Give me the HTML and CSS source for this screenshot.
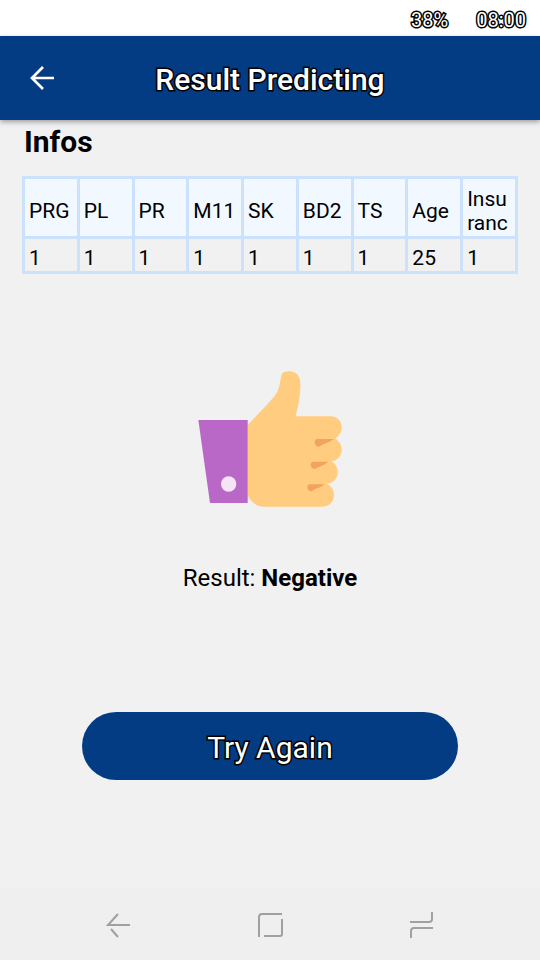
FILE: index.html
```html
<!DOCTYPE html>
<html lang="en">
<head>
<meta charset="utf-8">
<meta name="viewport" content="width=device-width, initial-scale=1">
<title>Result Predicting</title>
<link rel="stylesheet" href="styles.css">
</head>
<body>
<div class="status outlined"><span>38%</span><time>08:00</time></div>
<header class="appbar">
  <button class="back" type="button" aria-label="Back">
    <svg width="24" height="24" viewBox="0 0 24 24" fill="none" stroke="#fff" stroke-width="2.7"><path d="M24 12H2M13 1 2 12l11 11"/></svg>
  </button>
  <h1 class="title outlined">Result Predicting</h1>
</header>
<main class="content">
  <h2 class="heading">Infos</h2>
  <table class="infos">
    <thead>
      <tr><th scope="col">PRG</th><th scope="col">PL</th><th scope="col">PR</th><th scope="col">M11</th><th scope="col">SK</th><th scope="col">BD2</th><th scope="col">TS</th><th scope="col">Age</th><th scope="col">Insuranc</th></tr>
    </thead>
    <tbody>
      <tr><td>1</td><td>1</td><td>1</td><td>1</td><td>1</td><td>1</td><td>1</td><td>25</td><td>1</td></tr>
    </tbody>
  </table>
  <svg class="thumb" width="180" height="160" viewBox="0 0 540 480" role="img" aria-label="Thumbs up">
    <path fill="#ffcc80" d="M203 195C240 156 265 130 284 108 302 86 299 59 306 42 310 32 334 31 345 38 360 47 362 65 361 85 360 115 353 143 347 169H452C473 169 485 184 485 202 485 216 478 228 466 236 478 242 485 255 485 270 485 287 474 301 455 304 466 311 473 323 473 337 473 356 460 370 440 371 454 377 462 390 462 405 462 425 448 440 426 440H252C229 440 211 425 203 406Z"/>
    <path fill="#f2a35e" d="M410 237H461C449 248 433 249 421 258 413 264 404 256 404 247 404 242 406 239 410 237ZM399 305H444C433 317 420 317 409 325 401 330 392 323 392 315 392 309 395 306 399 305ZM389 373H433C423 384 410 383 398 392 390 397 382 390 382 382 382 377 385 374 389 373Z"/>
    <path fill="#ba68c8" d="M55 180H203V429H90Z"/>
    <circle cx="146" cy="372" r="23" fill="#f3e5f5"/>
  </svg>
  <p class="result">Result: <strong>Negative</strong></p>
  <button class="retry outlined" type="button">Try Again</button>
</main>
<nav class="navbar" aria-label="System">
  <button type="button" aria-label="Back"><svg width="28" height="28" viewBox="0 0 28 28"><path d="M26 14H4L14 3M7 18l7 8"/></svg></button>
  <button type="button" aria-label="Home"><svg width="28" height="28" viewBox="0 0 28 28"><path d="M3 26V6q0-3 3-3h20M26 8v15q0 2-2 2H8"/></svg></button>
  <button type="button" aria-label="Recent apps"><svg width="28" height="28" viewBox="0 0 28 28"><path d="M2 11h19q3 0 3-3V1M3 27v-7q0-3 3-3h19"/></svg></button>
</nav>
</body>
</html>
```
FILE: styles.css
```css
* { box-sizing: border-box; }
body {
  margin: 0;
  min-height: 100vh;
  display: flex;
  flex-direction: column;
  background: #f1f1f1;
  color: #000;
  font-family: Roboto, sans-serif;
}
button {
  border: 0;
  padding: 0;
  background: none;
  font-family: inherit;
}
svg { display: block; }
.outlined {
  color: #fff;
  -webkit-text-stroke: 3px #000;
  paint-order: stroke fill;
}
.status {
  display: flex;
  justify-content: flex-end;
  gap: 28px;
  padding: 2px 14px 0;
  height: 36px;
  background: #fff;
  font-size: 20px;
  line-height: 36px;
}
.appbar {
  position: relative;
  display: grid;
  grid-template-columns: 24px 1fr 24px;
  align-items: center;
  padding: 0 30px;
  height: 84px;
  background: #043c84;
  box-shadow: 0 2px 5px rgba(0, 0, 0, 0.35);
}
.title {
  margin: 0;
  padding-top: 4px;
  text-align: center;
  font-size: 30px;
  font-weight: 500;
  line-height: 36px;
}
.content {
  flex: 1;
  display: flex;
  flex-direction: column;
  align-items: center;
  padding: 4px 22px 24px;
}
.heading {
  align-self: stretch;
  margin: 0;
  padding-left: 2px;
  font-size: 30px;
  font-weight: 700;
  line-height: 36px;
}
.infos {
  width: 100%;
  margin-top: 16px;
  table-layout: fixed;
  border-collapse: collapse;
  font-size: 21px;
  line-height: 24px;
  text-align: left;
}
.infos th,
.infos td {
  border: 3px solid #cce2fc;
  padding: 6px 4px 0;
  font-weight: 400;
}
.infos th {
  height: 60px;
  background: #f1f8ff;
  word-break: break-all;
}
.infos td {
  height: 35px;
}
.thumb { margin-top: 86px; }
.result {
  margin: 40px 0 0;
  font-size: 24px;
  line-height: 36px;
}
.retry {
  width: 76%;
  height: 68px;
  margin-top: 116px;
  padding-top: 4px;
  border-radius: 34px;
  background: #043c84;
  font-size: 30px;
  line-height: 36px;
}
.navbar {
  display: grid;
  grid-template-columns: repeat(3, 1fr);
  align-items: center;
  padding: 2px 42px 0;
  height: 72px;
  background: #efefef;
}
.navbar button { justify-self: center; }
.navbar svg {
  fill: none;
  stroke: #a0a0a0;
  stroke-width: 2;
}
```
